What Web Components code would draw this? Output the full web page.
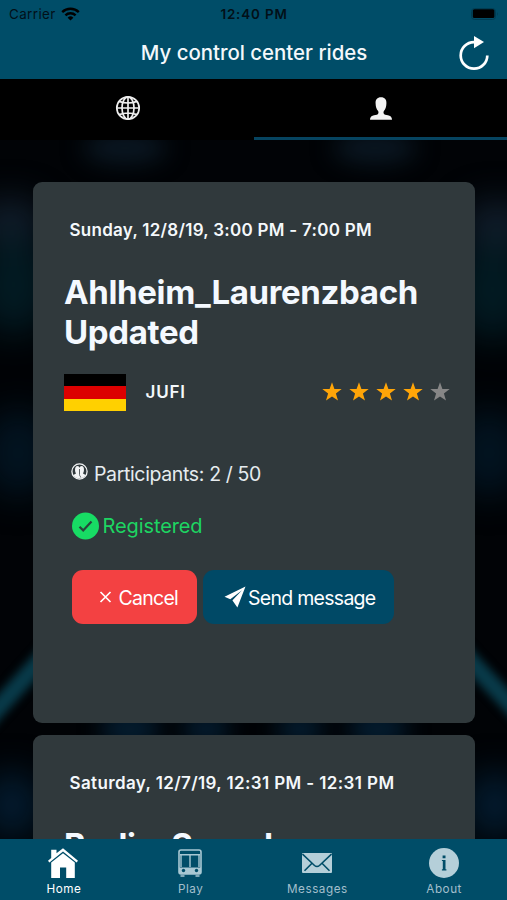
<!DOCTYPE html>
<html lang="en"><head><meta charset="utf-8"><title>My control center rides</title>
<style>
html,body{margin:0;height:100%;overflow:hidden;background:#000}
body{font-family:Inter,"Liberation Sans",sans-serif;color:#f4f8fb}
</style></head><body>
<ride-app></ride-app>
<script>
const define = (name, html, init) => customElements.define(name, class extends HTMLElement {
  constructor(){
    super();
    const t = document.createElement('template');
    t.innerHTML = html;
    this.attachShadow({mode:'open'}).appendChild(t.content.cloneNode(true));
  }
  connectedCallback(){ if(init) init(this, this.shadowRoot); }
});

define('status-bar', `
<style>
:host{display:grid;grid-template-columns:1fr auto 1fr;align-items:center;height:27px;padding:0 8px 0 9px;color:#021018;font-size:13.4px;white-space:nowrap}
.l{display:flex;align-items:center;gap:5px;letter-spacing:.4px}
b{font-weight:600;letter-spacing:.85px}
.r{display:flex;justify-content:flex-end}
svg{display:block}
</style>
<span class="l"><span>Carrier</span><svg width="19" height="14" viewBox="0 0 19 14" fill="none" stroke="#000" stroke-width="2.4"><path d="M1.2 5.1a11.8 11.8 0 0 1 16.6 0"/><path d="M4.4 8.4a7.2 7.2 0 0 1 10.2 0"/><path d="M9.5 13.6L6.6 10.7a4.1 4.1 0 0 1 5.8 0z" fill="#000" stroke="none"/></svg></span>
<b>12:40 PM</b>
<span class="r"><svg width="28" height="12" viewBox="0 0 28 12"><rect x=".5" y=".5" width="24" height="11" rx="3" fill="none" stroke="#003c52"/><rect x="1.8" y="1.3" width="21.6" height="8.6" rx="1.5"/><path d="M26 4q1.6 2 0 4z" fill="#003c52"/></svg></span>`);

define('nav-header', `
<style>
:host{display:grid;grid-template-columns:50px 1fr 50px;align-items:center;height:52px;padding:0 8px}
h1{margin:0;text-align:center;font-size:20.4px;font-weight:500;letter-spacing:0;white-space:nowrap;line-height:26px;padding-left:1px}
svg{display:block;justify-self:center}
</style>
<span></span><h1><slot></slot></h1>
<svg width="32" height="36" viewBox="0 0 32 36"><path d="M16 7.1A13.3 13.3 0 1 0 29.3 20.4" fill="none" stroke="#fff" stroke-width="2.7"/><path d="M16 1L26 7.1L16 13.2z" fill="#fff"/></svg>`);

define('tab-strip', `
<style>
:host{display:grid;grid-template-columns:1fr 1fr;height:61px;background:#000}
span{display:flex;align-items:center;justify-content:center;border-bottom:3px solid transparent;box-sizing:border-box;padding:0 0 0 2px}
.on{border-color:#064460}
</style>
<span><svg width="26" height="26" viewBox="0 0 26 26" fill="none" stroke="#eee" stroke-width="1.7"><circle cx="13" cy="13" r="11.2"/><ellipse cx="13" cy="13" rx="6" ry="11.2"/><path d="M13 1.8v22.4M1.8 13h22.4M4 6.4q9 3.2 18 0M4 19.6q9-3.2 18 0"/></svg></span>
<span class="on"><svg width="22" height="23" viewBox="0 0 22 23" fill="#f4f4f4"><path d="M11 .3c3.8 0 5.6 2.4 5.4 6.1-.1 3.200-.8 5.600-2.500 7.700-.6.8-.5 2.600.3 3.100 1 .8 3.400.8 5.200 1.500 1.700.7 2.500 1.800 2.600 4H0c.1-2.200.9-3.300 2.600-4 1.800-.7 4.200-.7 5.200-1.500.8-.5.9-2.300.3-3.100-1.700-2.100-2.400-4.500-2.500-7.700C5.400 2.700 7.200.3 11 .3z"/></svg></span>`);

define('back-drop', `
<style>:host{display:block;width:100%;height:100%}svg{display:block}</style>
<svg width="507" height="699" viewBox="0 140 507 699" preserveAspectRatio="none" color-interpolation-filters="sRGB">
<defs><filter id="a" x="-150%" y="-150%" width="400%" height="400%"><feGaussianBlur stdDeviation="17"/></filter><filter id="b" x="-50%" y="-50%" width="200%" height="200%"><feGaussianBlur stdDeviation="4"/></filter><filter id="c" x="-50%" y="-300%" width="200%" height="700%"><feGaussianBlur stdDeviation="11"/></filter></defs>
<rect y="140" width="507" height="699" fill="#010306"/>
<g filter="url(#a)">
<ellipse cx="10" cy="222" rx="34" ry="24" fill="#111e2c"/><ellipse cx="497" cy="226" rx="34" ry="26" fill="#111e2c"/>
<ellipse cx="14" cy="285" rx="38" ry="50" fill="#021a22"/><ellipse cx="493" cy="290" rx="38" ry="50" fill="#021a22"/>
<ellipse cx="18" cy="453" rx="34" ry="44" fill="#021421"/><ellipse cx="489" cy="453" rx="34" ry="44" fill="#021421"/>
<ellipse cx="12" cy="805" rx="28" ry="34" fill="#031c30"/><ellipse cx="495" cy="805" rx="28" ry="34" fill="#031c30"/>
</g>
<g filter="url(#c)"><ellipse cx="125" cy="148" rx="42" ry="16" fill="#0a1722"/><ellipse cx="375" cy="148" rx="42" ry="16" fill="#0a1722"/><ellipse cx="130" cy="729" rx="30" ry="18" fill="#041d30"/><ellipse cx="206" cy="729" rx="24" ry="16" fill="#041d30"/><ellipse cx="300" cy="729" rx="24" ry="16" fill="#041d30"/><ellipse cx="378" cy="729" rx="30" ry="18" fill="#041d30"/></g>
<g filter="url(#b)" stroke="#083a49" stroke-width="18" fill="none"><path d="M50 650L-20 728"/><path d="M457 647L527 722"/></g>
</svg>`);

define('star-rating', `
<style>:host{display:flex;gap:7px;margin-top:-1px}svg{display:block;fill:#ffa508}.off{fill:#868686}</style>`,
(el, root) => {
  const n = +el.getAttribute('value');
  for(let i=0;i<5;i++) root.innerHTML += `<svg class="${i<n?'':'off'}" width="20" height="19" viewBox="0 0 20 19"><path d="M10 .2l2.400 6.700 7.300.2-5.800 4.400 2.100 7-6-4.100-6 4.100 2.100-7L.3 7.100l7.300-.2z"/></svg>`;
});

define('action-button', `
<style>:host{display:flex;align-items:center;height:54px;box-sizing:border-box;border-radius:11px;color:#fff;background:var(--bg);font-size:19.500px;letter-spacing:-.72px;white-space:nowrap;padding-top:1px}slot[name=icon]{display:flex;margin-top:-1px}</style>
<slot name="icon"></slot><slot></slot>`);

define('ride-card', `
<style>
:host{display:block;box-sizing:border-box;width:442px;background:#30393c;border-radius:9px;padding:38px 25px 0 31.500px}
.date{padding-left:5.500px;font-size:17px;line-height:20px;font-weight:600;letter-spacing:var(--date-spacing,.27px);white-space:nowrap}
h2{margin:32px 0 0;font-size:33px;line-height:40px;font-weight:700;letter-spacing:-.35px;color:#f4f9ff}
</style>
<div class="date"><slot name="date"></slot></div><h2><slot name="title"></slot></h2><slot></slot>`);

define('ride-details', `
<style>
:host{display:block}
.org{display:flex;align-items:center;margin-top:21px;height:38px}
.flag{width:62px;height:37px;background:linear-gradient(#000 33.300%,#dc0000 33.300% 66.600%,#ffd000 66.600%)}
.org b{margin-left:19.500px;font-size:17px;font-weight:600;letter-spacing:.8px;flex:1}
.part{display:flex;align-items:center;margin:50px 0 0 7px;height:26px;font-size:19.500px;letter-spacing:-.36px;gap:6px;color:#e6ecef}
.part svg{margin-top:-5px}
.reg{display:flex;align-items:center;margin:25px 0 0 7.500px;height:28px;gap:4px;color:#1dd562;font-size:20px;letter-spacing:-.1px}
.acts{display:flex;gap:6px;margin:30px 0 0 7.500px}
.no{--bg:#f34142;width:125px;padding-left:27px}.msg{--bg:#004966;width:191px;padding-left:21.500px}
svg{display:block;flex:none}
</style>
<div class="org"><span class="flag"></span><b>JUFI</b><star-rating value="4"></star-rating></div>
<div class="part"><svg width="17" height="17" viewBox="0 0 17 17"><circle cx="8.500" cy="8.500" r="7.600" fill="none" stroke="#f2f4f5" stroke-width="1.300"/><path d="M2.500 12.500c.4-1.500 2.300-1.200 2.500-2.200C3.600 8.500 3.600 3 6.300 3c1.400 0 2 1 2.200 1.900C8.800 3.900 9.400 3 10.800 3c2.700 0 2.700 5.500 1.200 7.300.2 1 2.100.7 2.500 2.200-1 1.500-3 3-6 3s-5-1.500-6-3z" fill="#f2f4f5"/><path d="M8.500 6v5.500c0 1.500 1 1.500 1.300 3" fill="none" stroke="#30393c" stroke-width=".8"/></svg><span>Participants: 2 / 50</span></div>
<div class="reg"><svg width="27" height="28" viewBox="0 0 27 28"><circle cx="13.500" cy="14" r="13.500" fill="#17dc64"/><path d="M7.500 14.800l3.700 3.600 8.300-8.800" fill="none" stroke="#29443b" stroke-width="2.200"/></svg><span>Registered</span></div>
<div class="acts">
<action-button class="no"><svg slot="icon" width="20" height="14" viewBox="0 0 20 14"><path d="M1.500 2l10 10M11.500 2l-10 10" stroke="#fff" stroke-width="1.700"/></svg>Cancel</action-button>
<action-button class="msg"><svg slot="icon" width="24" height="22" viewBox="0 0 24 22" fill="#fff"><path d="M21.500.5L.5 10.800l5.800 2.500L18 4.200 8.500 14.300v.2l4.900 6.900z"/></svg>Send message</action-button>
</div>`);

define('tab-item', `
<style>:host{display:grid;grid-template-rows:32px 16px;row-gap:1px;justify-items:center;align-items:center;padding:8px 0 0 0;color:#a3bfcc;font-size:11.700px;letter-spacing:.55px}:host([active]){color:#fff}span{line-height:18px;padding:2px 0 0 1px}slot[name=icon]{display:block}</style>
<slot name="icon"></slot><span><slot></slot></span>`);

define('tab-bar', `
<style>:host{display:grid;grid-template-columns:repeat(4,1fr);height:61px;background:#004d68;color:#fff}svg{display:block}</style>
<tab-item active><svg slot="icon" width="30" height="30" viewBox="0 0 30 30" fill="#fff"><path d="M3.200 1.800h5.300v3.500L15 .2l15 12.500-1.400 1.700L15 3.400 1.400 14.400 0 12.700l3.200-2.700z"/><path d="M3.200 14.600L15 5.200l11.800 9.400V30H18.200V19.500h-6.200V30H3.200z"/></svg>Home</tab-item>
<tab-item><svg slot="icon" width="24" height="28" viewBox="0 0 24 28"><rect x="1" y="1" width="22" height="24" rx="2" fill="none" stroke="#a8c8d3" stroke-width="1.600"/><path d="M1 18.500h22v5q0 1.500-1.500 1.500h-19Q1 25 1 23.500zM2.500 26.300h4v1.500h-4zM17.500 26.300h4v1.500h-4z" fill="#a8c8d3"/><path d="M2 5.700h20M12 6v12M3 6v12M21 6v12" fill="none" stroke="#a8c8d3" stroke-width="1.400"/><circle cx="5.500" cy="21.500" r="1.700" fill="#004d68"/><circle cx="18.500" cy="21.500" r="1.700" fill="#004d68"/></svg>Play</tab-item>
<tab-item><svg slot="icon" width="30" height="20" viewBox="0 0 30 20"><rect width="30" height="20" rx="1" fill="#b5cfd9"/><path d="M.5 1l12 11.500q2.500 2 5 0L29.500 1M2.500 17.800l7.500-7.500M27.500 17.800l-7.500-7.500" fill="none" stroke="#004d68" stroke-width="1.600"/></svg>Messages</tab-item>
<tab-item><svg slot="icon" width="30" height="30" viewBox="0 0 30 30"><circle cx="15" cy="15" r="15" fill="#b5cfd9"/><path d="M13.600 7.500h2.900v2.700h-2.900zM12.900 12h3.600v9.300h.9v1.100h-4.500v-1.100h.9v-8.200h-.9z" fill="#004d68"/></svg>About</tab-item>`);

define('ride-app', `
<style>
:host{display:flex;flex-direction:column;width:507px;height:900px;overflow:hidden}
header{background:#004d68}
main{display:grid;flex:1;min-height:0;overflow:hidden}
main>*{grid-area:1/1}
.list{display:flex;flex-direction:column;gap:12px;align-items:center;padding-top:42px;height:657px;z-index:1}
ride-card{flex:none}
.tall{height:541px}.next{height:160px;--date-spacing:.38px}
</style>
<header><status-bar></status-bar><nav-header>My control center rides</nav-header></header>
<tab-strip></tab-strip>
<main><back-drop></back-drop>
<div class="list">
<ride-card class="tall"><span slot="date">Sunday, 12/8/19, 3:00 PM - 7:00 PM</span><span slot="title">Ahlheim_Laurenzbach Updated</span><ride-details></ride-details></ride-card>
<ride-card class="next"><span slot="date">Saturday, 12/7/19, 12:31 PM - 12:31 PM</span><span slot="title">Berlin_Spandau</span></ride-card>
</div></main>
<tab-bar></tab-bar>`);
</script></body></html>
